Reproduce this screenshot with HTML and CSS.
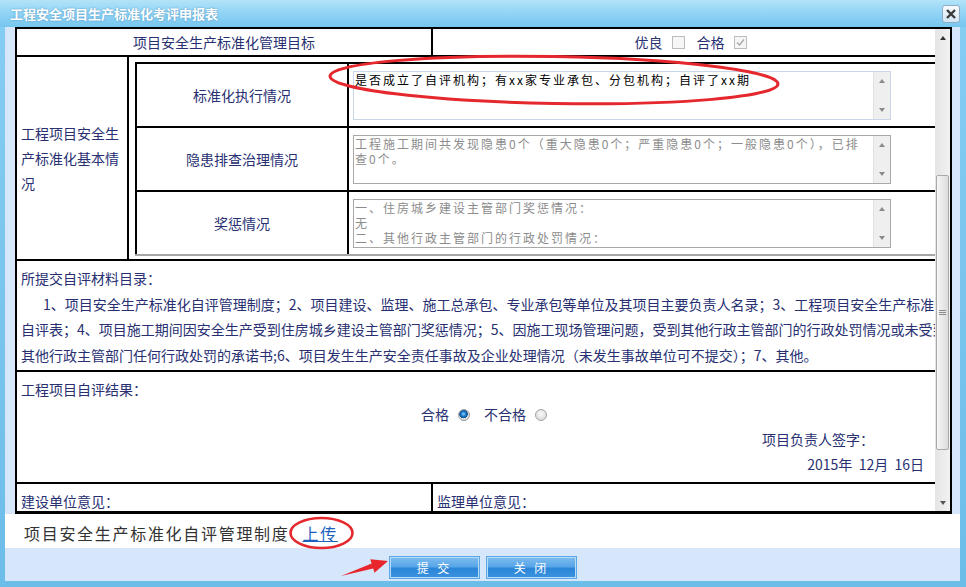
FILE: index.html
```html
<!DOCTYPE html>
<html lang="zh-CN">
  <head>
    <meta charset="UTF-8" />
    <meta name="viewport" content="width=device-width, initial-scale=1.0" />
    <title>工程安全项目生产标准化考评申报表</title>
    <link rel="stylesheet" href="styles.css">
  </head>
  <body>
    <div class="window">
      <!-- 标题栏 -->
      <div class="titlebar">
        <span class="title">工程安全项目生产标准化考评申报表</span>
        <span class="close">
          <svg width="12" height="12" viewBox="0 0 12 12"><path d="M2 2L10 10M10 2L2 10" stroke="#3a3a3a" stroke-width="2.4" /></svg>
        </span>
      </div>

      <div class="frame">
        <div class="panel">
          <div class="grid-box">
            <div class="sheet">
              <table class="report">
                <colgroup>
                  <col class="col-a" />
                  <col class="col-b" />
                  <col />
                </colgroup>
                <tr class="r1">
                  <td colspan="2" class="center">项目安全生产标准化管理目标</td>
                  <td class="center">
                    <span class="choice">优良 <span class="chk"></span> 合格 <span class="chk">
                      <svg width="11" height="11" viewBox="0 0 11 11"><path d="M2 5.5L4.5 8L9 2.5" fill="none" stroke="#a9a9a9" stroke-width="1.4" /></svg>
                    </span></span>
                  </td>
                </tr>
                <tr class="r2">
                  <td class="side-label">工程项目安全生产标准化基本情况</td>
                  <td colspan="2" class="nested">
                    <table class="inner">
                      <tr>
                        <td class="label">标准化执行情况</td>
                        <td class="field">
                          <div class="memo active">
                            <textarea readonly>是否成立了自评机构；有xx家专业承包、分包机构；自评了xx期</textarea>
                            <div class="mini-scroll"><span class="arr-up"></span><span class="arr-down"></span></div>
                          </div>
                        </td>
                      </tr>
                      <tr>
                        <td class="label">隐患排查治理情况</td>
                        <td class="field">
                          <div class="memo">
                            <textarea readonly>工程施工期间共发现隐患0个（重大隐患0个；严重隐患0个；一般隐患0个），已排查0个。</textarea>
                            <div class="mini-scroll"><span class="arr-up"></span><span class="arr-down"></span></div>
                          </div>
                        </td>
                      </tr>
                      <tr>
                        <td class="label">奖惩情况</td>
                        <td class="field">
                          <div class="memo">
                            <textarea readonly>一、住房城乡建设主管部门奖惩情况：
无
二、其他行政主管部门的行政处罚情况：
无</textarea>
                            <div class="mini-scroll"><span class="arr-up"></span><span class="arr-down"></span></div>
                          </div>
                        </td>
                      </tr>
                    </table>
                  </td>
                </tr>
                <tr class="r3">
                  <td colspan="3" class="list">
                    <div>所提交自评材料目录：</div>
                    <div class="indent">1、项目安全生产标准化自评管理制度；2、项目建设、监理、施工总承包、专业承包等单位及其项目主要负责人名录；3、工程项目安全生产标准化</div>
                    <div>自评表；4、项目施工期间因安全生产受到住房城乡建设主管部门奖惩情况；5、因施工现场管理问题，受到其他行政主管部门的行政处罚情况或未受到</div>
                    <div>其他行政主管部门任何行政处罚的承诺书;6、项目发生生产安全责任事故及企业处理情况（未发生事故单位可不提交）；7、其他。</div>
                  </td>
                </tr>
                <tr class="r4">
                  <td colspan="3" class="result">
                    <div>工程项目自评结果：</div>
                    <div class="center">
                      <span class="choice">合格 <span class="radio on"></span> 不合格 <span class="radio"></span></span>
                    </div>
                    <div class="sign">项目负责人签字：</div>
                    <div class="date">2015年&nbsp; 12月&nbsp; 16日</div>
                  </td>
                </tr>
                <tr class="r5">
                  <td colspan="2">建设单位意见：</td>
                  <td>监理单位意见：</td>
                </tr>
              </table>
            </div>
            <div class="vscroll">
              <div class="vbtn"><span class="arr-up dark"></span></div>
              <div class="track">
                <div class="thumb"><span class="grip"></span></div>
              </div>
              <div class="vbtn"><span class="arr-down dark"></span></div>
            </div>
          </div>
        </div>

        <div class="attach">项目安全生产标准化自评管理制度<a href="#">上传</a></div>

        <div class="footer">
          <button class="btn-blue">提 交</button>
          <button class="btn-blue">关 闭</button>
        </div>
      </div>

      <!-- 红色标注 -->
      <svg class="marks" width="966" height="587" viewBox="0 0 966 587">
        <ellipse cx="554" cy="80" rx="224" ry="23.5" transform="rotate(1 554 80)" fill="none" stroke="#e5282e" stroke-width="3" />
        <ellipse cx="321.5" cy="533" rx="31" ry="15" fill="none" stroke="#e5282e" stroke-width="2.6" />
        <polygon points="341,576 371.6,563.6 370.3,559.3 388,561 374.5,572.7 373.2,568.4" fill="#e8262c" />
      </svg>
    </div>
  </body>
</html>
```
FILE: styles.css
```css
body {
  margin: 0;
  font-family: "Noto Sans CJK SC", "Liberation Sans", sans-serif;
  background: #fff;
}
.window {
  position: relative;
  width: 966px;
  height: 587px;
  background: linear-gradient(to bottom, #86cdf2, #6dbde9);
  overflow: hidden;
}
.titlebar {
  height: 27px;
  display: flex;
  align-items: center;
  justify-content: space-between;
  padding: 0 6px 0 10px;
  background: linear-gradient(to bottom, #b3e3f9, #93d5f6 45%, #76c6ef);
}
.title {
  color: #fff;
  font-size: 13px;
  font-weight: bold;
  text-shadow: 0 0 2px rgba(40, 100, 150, 0.6);
}
.close {
  width: 18px;
  height: 18px;
  box-sizing: border-box;
  border: 1px solid #8eabc4;
  border-radius: 3px;
  background: linear-gradient(to bottom, #f7fbfe, #d3e5f3);
  display: flex;
  align-items: center;
  justify-content: center;
  margin-top: 1px;
}
.frame {
  margin: 0 6px 0 5px;
}
.panel {
  background: #d6e6fb;
  padding: 0 8px 0 10px;
}
.grid-box {
  display: flex;
  height: 487px;
  box-sizing: border-box;
  border: 2px solid #000;
  border-bottom-width: 3px;
  background: #fff;
}
.sheet {
  flex: 1;
  overflow: hidden;
}
.report {
  width: 934px;
  border-collapse: collapse;
  border-style: hidden;
  table-layout: fixed;
  color: #283072;
  font-size: 14px;
  line-height: 25px;
}
.report td {
  border: 2px solid #000;
  padding: 0 4px;
  vertical-align: middle;
}
.col-a {
  width: 111px;
}
.col-b {
  width: 304px;
}
.center {
  text-align: center;
}
.r1 td {
  height: 26px;
  line-height: 22px;
}
.choice {
  display: inline-flex;
  align-items: center;
  gap: 9px;
}
.chk {
  width: 13px;
  height: 13px;
  box-sizing: border-box;
  border: 1px solid #bcbcbc;
  background: #f6f6f6;
  display: inline-flex;
  align-items: center;
  justify-content: center;
  margin-right: 3px;
}
.side-label {
  line-height: 25px;
}
.report td.nested {
  padding: 5px 0 3px 6px;
}
.inner {
  width: 100%;
  border-collapse: collapse;
}
.report .inner td {
  border: 2px solid #000;
  height: 62px;
  padding: 0;
}
.report .inner td.label {
  width: 210px;
  text-align: center;
}
.report .inner td.field {
  padding-left: 4px;
  border-right: none;
}
.report .inner tr:last-child td {
  border-bottom-color: #a6a6a6;
}
.memo {
  display: flex;
  width: 538px;
  height: 49px;
  box-sizing: border-box;
  border: 1px solid #a8a8a8;
  background: #fff;
}
.memo.active {
  border-color: #c8d6e8;
}
.memo textarea {
  flex: 1;
  border: 0;
  padding: 0 1px;
  margin: 0;
  resize: none;
  overflow: hidden;
  outline: none;
  font-family: "Noto Sans CJK SC", "Liberation Sans", sans-serif;
  font-size: 12px;
  line-height: 15px;
  letter-spacing: 2px;
  color: #8c8c8c;
  background: #fff;
}
.memo.active textarea {
  color: #000;
}
.mini-scroll {
  width: 17px;
  background: #efefef;
  border-left: 1px solid #e2e2e2;
  display: flex;
  flex-direction: column;
  align-items: center;
  justify-content: space-between;
  padding: 7px 0;
  box-sizing: border-box;
}
.arr-up {
  width: 0;
  height: 0;
  border-left: 3.5px solid transparent;
  border-right: 3.5px solid transparent;
  border-bottom: 4px solid #8a8a8a;
}
.arr-down {
  width: 0;
  height: 0;
  border-left: 3.5px solid transparent;
  border-right: 3.5px solid transparent;
  border-top: 4px solid #8a8a8a;
}
.arr-up.dark {
  border-bottom-color: #333;
}
.arr-down.dark {
  border-top-color: #555;
}
.report td.list {
  padding: 5px 4px 2px 4px;
  line-height: 25.5px;
  white-space: nowrap;
}
.indent {
  text-indent: 22px;
}
.report td.result {
  padding: 5px 4px;
}
.radio {
  width: 12px;
  height: 12px;
  box-sizing: border-box;
  border-radius: 50%;
  border: 1px solid #a5a5a5;
  background: radial-gradient(circle at 50% 40%, #fafafa, #d2d2d2);
  display: inline-block;
}
.radio.on {
  background: radial-gradient(circle at 45% 40%, #8fd0ff 0, #1a78c8 2.5px, #0d4e8c 4px, #e8e8e8 4.6px, #cfcfcf 6px);
  margin-right: 5px;
}
.sign {
  text-align: right;
  padding-right: 73px;
}
.date {
  text-align: right;
  padding-right: 23px;
}
.r5 td {
  height: 40px;
  vertical-align: top;
  padding-top: 9px;
  line-height: 16px;
}
.vscroll {
  width: 15px;
  display: flex;
  flex-direction: column;
  background: linear-gradient(to right, #e4e4e4, #f2f2f2);
}
.vbtn {
  height: 17px;
  display: flex;
  align-items: center;
  justify-content: center;
}
.track {
  flex: 1;
  padding-top: 129px;
}
.thumb {
  height: 275px;
  box-sizing: border-box;
  margin: 0 1px;
  border: 1px solid #a9a9a9;
  border-radius: 2px;
  background: linear-gradient(to right, #f6f6f6, #dcdcdc);
  display: flex;
  align-items: center;
  justify-content: center;
}
.grip {
  width: 7px;
  height: 5px;
  background: repeating-linear-gradient(to bottom, #8c8c8c 0 1px, transparent 1px 2px);
}
.attach {
  height: 34px;
  box-sizing: border-box;
  padding: 4px 0 0 19px;
  background: #fff;
  display: flex;
  align-items: center;
  font-size: 16px;
  letter-spacing: 1.7px;
  color: #333;
}
.attach a {
  color: #1c5fbf;
  margin-left: 13px;
}
.footer {
  height: 33px;
  box-sizing: border-box;
  padding: 8px 0 0 384px;
  background: #d6e6fb;
  display: flex;
  align-items: flex-start;
  gap: 6px;
}
.btn-blue {
  width: 91px;
  height: 23px;
  padding: 0;
  box-sizing: border-box;
  border: 1px solid #5aa6e6;
  box-shadow: inset 0 0 0 1px #b9dcf8;
  background: linear-gradient(to bottom, #7fbdef, #58a6e8 45%, #2b86d8 55%, #3c93de);
  color: #fff;
  font-family: "Noto Sans CJK SC", sans-serif;
  font-size: 12px;
  letter-spacing: 3px;
  cursor: pointer;
}
.marks {
  position: absolute;
  top: 0;
  left: 0;
  pointer-events: none;
}
```
